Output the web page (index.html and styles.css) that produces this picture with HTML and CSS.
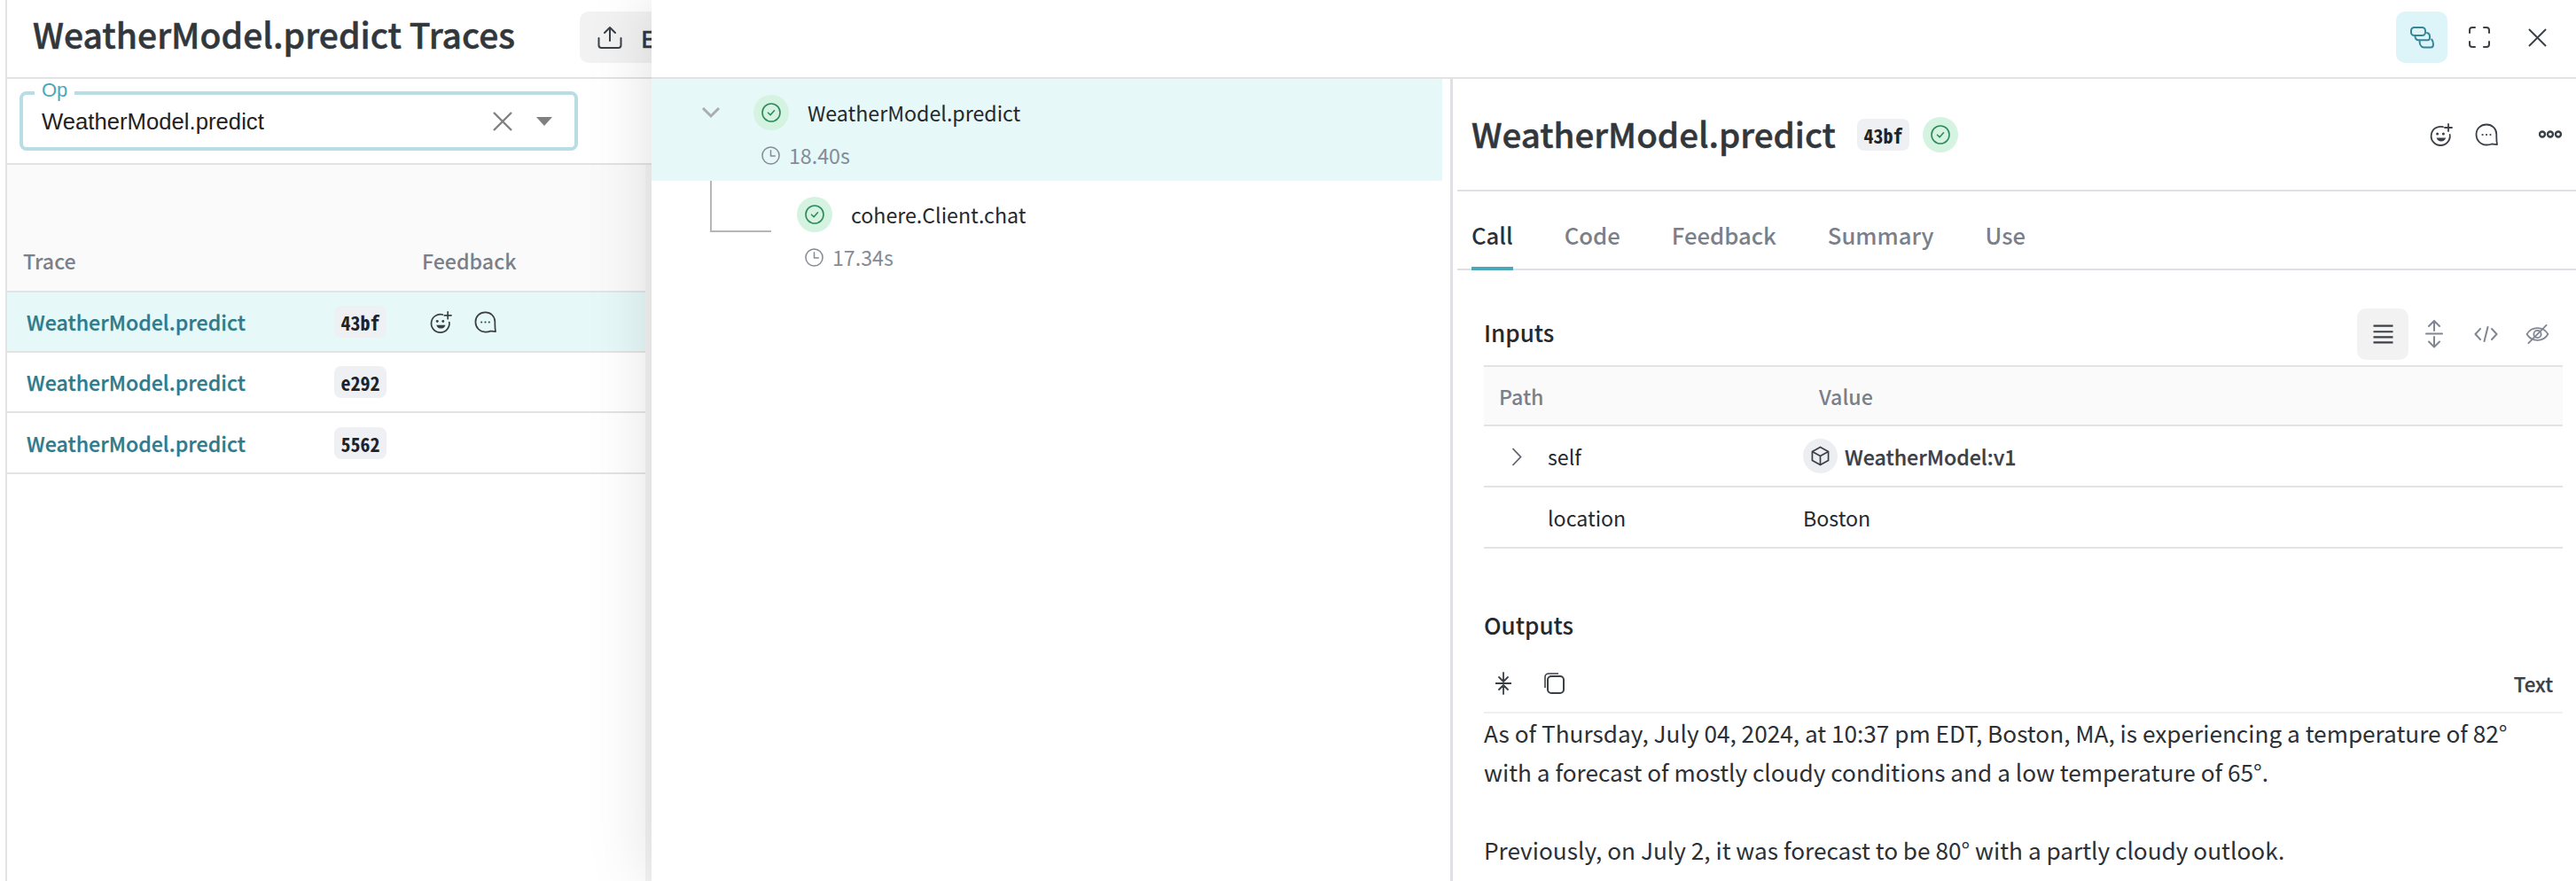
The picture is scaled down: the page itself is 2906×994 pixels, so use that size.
FILE: index.html
```html
<!DOCTYPE html>
<html lang="en">
<head>
<meta charset="utf-8">
<title>WeatherModel.predict Traces</title>
<link rel="stylesheet" href="styles.css">
</head>
<body>
<svg class="defs" width="0" height="0" aria-hidden="true">
  <defs>
    <symbol id="ok" viewBox="0 0 22 22"><circle cx="11" cy="11" r="10" fill="none" stroke="#2f8a5b" stroke-width="1.6"/><path d="M7.5 11.2l2.6 2.6 4.4-5" fill="none" stroke="#2f8a5b" stroke-width="1.6" stroke-linecap="round" stroke-linejoin="round"/></symbol>
    <symbol id="clock" viewBox="0 0 22 22"><circle cx="11" cy="11" r="10" fill="none" stroke="#858c96" stroke-width="1.6"/><path d="M11 5v6.5h5" fill="none" stroke="#858c96" stroke-width="1.6" stroke-linecap="round" stroke-linejoin="round"/></symbol>
    <symbol id="smile" viewBox="0 0 26 26"><path d="M15 4.2A10.6 10.6 0 1 0 22.7 13" fill="none" stroke="#3b4047" stroke-width="1.8" stroke-linecap="round"/><circle cx="8.6" cy="12" r="1.5" fill="#3b4047"/><circle cx="15.4" cy="12" r="1.5" fill="#3b4047"/><path d="M7.6 16.4h10.6c-.8 2.8-2.8 4-5.3 4s-4.500-1.200-5.300-4z" fill="#3b4047"/><path d="M21 1v8M17 5h8" fill="none" stroke="#3b4047" stroke-width="1.8" stroke-linecap="round"/></symbol>
    <symbol id="chat" viewBox="0 0 26 26"><path d="M13 1.500c6.500 0 11.300 4.800 11.300 11 0 3.200-.2 6.500.7 11.500-2.800-.2-4.800-.4-6-.5-1.800.8-3.800 1-6 1-6.500 0-11.500-5.200-11.500-11.800S6.500 1.500 13 1.500z" fill="none" stroke="#3b4047" stroke-width="1.800" stroke-linejoin="round"/><circle cx="8.500" cy="13" r="1.100" fill="#3b4047"/><circle cx="13" cy="13" r="1.100" fill="#3b4047"/><circle cx="17.500" cy="13" r="1.100" fill="#3b4047"/></symbol>
  </defs>
</svg>
<div class="app">
  <nav class="rail"><span class="rail-text">s</span></nav>
  <main class="traces">
    <header class="traces-head">
      <h1 class="page-title">WeatherModel.predict Traces</h1>
      <button class="export" type="button">
        <svg class="export-icon" viewBox="0 0 28 26"><path d="M14 17V2M8 8l6-6 6 6M1.500 14v8c0 1.700 1.300 3 3 3h19c1.700 0 3-1.300 3-3v-8" fill="none" stroke="#3b4047" stroke-width="2" stroke-linecap="round" stroke-linejoin="round"/></svg>
        <span class="export-text">Export</span>
      </button>
    </header>
    <section class="filter-bar">
      <div class="select">
        <span class="select-legend">Op</span>
        <span class="select-value">WeatherModel.predict</span>
        <svg class="select-clear" viewBox="0 0 22 22"><path d="M1 1l20 20M21 1L1 21" fill="none" stroke="#808080" stroke-width="2.400"/></svg>
        <svg class="select-caret" viewBox="0 0 18 10"><path d="M0 0h18l-9 10z" fill="#808080"/></svg>
      </div>
    </section>
    <section class="grid">
      <div class="grid-head">
        <span class="col-trace col-label">Trace</span>
        <span class="col-label">Feedback</span>
      </div>
      <div class="grid-row is-selected">
        <div class="col-trace"><a class="trace-link">WeatherModel.predict</a><code class="hash">43bf</code></div>
        <div class="feedback">
          <svg class="fb-icon"><use href="#smile"/></svg>
          <svg class="fb-icon"><use href="#chat"/></svg>
        </div>
      </div>
      <div class="grid-row">
        <div class="col-trace"><a class="trace-link">WeatherModel.predict</a><code class="hash">e292</code></div>
      </div>
      <div class="grid-row">
        <div class="col-trace"><a class="trace-link">WeatherModel.predict</a><code class="hash">5562</code></div>
      </div>
    </section>
  </main>
  <aside class="drawer">
    <div class="drawer-top">
      <button class="top-btn is-active" type="button">
        <svg class="stack-icon" viewBox="0 0 27 25"><rect x="1" y="1" width="16" height="9" rx="3.500" fill="none" stroke="#38859a" stroke-width="2"/><path d="M5.500 10.500c0 3 1.500 4.800 4 4.800h10c1.500 0 2.500-1 2.500-2.500V11c0-2-1-3.500-3-4M10.500 15.500c0 4 1.500 8 5 8h7.500c2 0 3-1.500 3-3.500 0-2-.3-4-1.800-5.500" fill="none" stroke="#38859a" stroke-width="2" stroke-linecap="round"/></svg>
      </button>
      <button class="top-btn" type="button">
        <svg class="full-icon" viewBox="0 0 24 24"><path d="M7 1H4C2.300 1 1 2.300 1 4v3M17 1h3c1.700 0 3 1.300 3 3v3M23 17v3c0 1.700-1.300 3-3 3h-3M7 23H4c-1.700 0-3-1.300-3-3v-3" fill="none" stroke="#3b4047" stroke-width="2" stroke-linecap="round"/></svg>
      </button>
      <button class="top-btn" type="button">
        <svg class="close-icon" viewBox="0 0 22 22"><path d="M1 1l20 20M21 1L1 21" fill="none" stroke="#3b4047" stroke-width="2"/></svg>
      </button>
    </div>
    <div class="drawer-body">
      <div class="tree">
        <div class="tree-row is-current">
          <div class="tree-line">
            <svg class="tree-chevron" viewBox="0 0 22 14"><path d="M2 2l9 9 9-9" fill="none" stroke="#a9adb3" stroke-width="3"/></svg>
            <span class="status"><svg class="status-icon"><use href="#ok"/></svg></span>
            <span class="tree-name">WeatherModel.predict</span>
          </div>
          <div class="tree-time"><svg class="clock"><use href="#clock"/></svg>18.40s</div>
        </div>
        <div class="tree-row is-child">
          <span class="tree-link"></span>
          <div class="tree-line">
            <span class="status"><svg class="status-icon"><use href="#ok"/></svg></span>
            <span class="tree-name">cohere.Client.chat</span>
          </div>
          <div class="tree-time"><svg class="clock"><use href="#clock"/></svg>17.34s</div>
        </div>
      </div>
      <div class="detail">
        <div class="detail-head">
          <h2 class="detail-title">WeatherModel.predict</h2>
          <code class="hash">43bf</code>
          <span class="status status-head"><svg class="status-icon"><use href="#ok"/></svg></span>
          <div class="detail-actions">
            <svg class="act-icon"><use href="#smile"/></svg>
            <svg class="act-icon"><use href="#chat"/></svg>
            <svg class="more-icon" viewBox="0 0 26 9"><circle cx="4" cy="4.500" r="3" fill="none" stroke="#3b4047" stroke-width="2.400"/><circle cx="13" cy="4.500" r="3" fill="none" stroke="#3b4047" stroke-width="2.400"/><circle cx="22" cy="4.500" r="3" fill="none" stroke="#3b4047" stroke-width="2.400"/></svg>
          </div>
        </div>
        <div class="tabs">
          <span class="tab is-on">Call</span>
          <span class="tab">Code</span>
          <span class="tab">Feedback</span>
          <span class="tab">Summary</span>
          <span class="tab">Use</span>
        </div>
        <div class="call">
          <div class="section-head">
            <h3 class="section-title">Inputs</h3>
            <div class="view-tools">
              <span class="tool is-on"><svg class="tool-icon" viewBox="0 0 22 20"><path d="M1 1.500h20M1 7.500h20M1 13h20M1 18.500h20" fill="none" stroke="#3b4047" stroke-width="2"/></svg></span>
              <span class="tool"><svg class="tool-icon tall" viewBox="0 0 20 32"><path d="M1 15.500h18M10 12V2M4 7l6-6 6 6M10 19v11M4 24.500l6 6 6-6" fill="none" stroke="#808792" stroke-width="2" stroke-linecap="round" stroke-linejoin="round"/></svg></span>
              <span class="tool"><svg class="tool-icon" viewBox="0 0 27 18"><path d="M7 3L1.500 9 7 15M20 3l5.500 6-5.500 6M15.500 1l-4 16" fill="none" stroke="#808792" stroke-width="2" stroke-linecap="round" stroke-linejoin="round"/></svg></span>
              <span class="tool"><svg class="tool-icon" viewBox="0 0 28 24"><path d="M1 12c3-5 7.500-7.500 13-7.500S24 7 27 12c-3 5-7.500 7.500-13 7.500S4 17 1 12z" fill="none" stroke="#808792" stroke-width="2"/><circle cx="14" cy="12" r="4.500" fill="none" stroke="#808792" stroke-width="2"/><path d="M25 1L3 23" fill="none" stroke="#808792" stroke-width="2" stroke-linecap="round"/></svg></span>
            </div>
          </div>
          <div class="kv">
            <div class="kv-head"><span class="kv-path">Path</span><span class="kv-value-label">Value</span></div>
            <div class="kv-row">
              <svg class="kv-chevron" viewBox="0 0 12 21"><path d="M1.500 1l9 9.500-9 9.500" fill="none" stroke="#5f6670" stroke-width="1.800"/></svg>
              <span class="kv-key">self</span>
              <span class="kv-val is-ref"><span class="cube"><svg class="cube-icon" viewBox="0 0 22 24"><path d="M11 1.500l9.500 5.300v10.400L11 22.500l-9.500-5.300V6.800zM1.500 6.800L11 12l9.500-5.200M11 12v10.500" fill="none" stroke="#3b4047" stroke-width="1.800" stroke-linejoin="round"/></svg></span>WeatherModel:v1</span>
            </div>
            <div class="kv-row">
              <span class="kv-key">location</span>
              <span class="kv-val">Boston</span>
            </div>
          </div>
          <h3 class="section-title outputs-title">Outputs</h3>
          <div class="output-tools">
            <svg class="out-collapse" viewBox="0 0 18 26"><path d="M0 13h18M9 1v9M4 6l5 5 5-5M9 25v-9M4 20l5-5 5 5" fill="none" stroke="#3b4047" stroke-width="1.800" stroke-linecap="round" stroke-linejoin="round"/></svg>
            <svg class="out-copy" viewBox="0 0 24 24"><rect x="5" y="4" width="18" height="19" rx="4" fill="none" stroke="#3b4047" stroke-width="2"/><path d="M2 17V5c0-2.200 1.800-4 4-4h11" fill="none" stroke="#3b4047" stroke-width="1.600"/></svg>
            <span class="out-type">Text</span>
          </div>
          <div class="output-text">
            <p class="para">As of Thursday, July 04, 2024, at 10:37 pm EDT, Boston, MA, is experiencing a temperature of 82°<br>with a forecast of mostly cloudy conditions and a low temperature of 65°.</p>
            <p class="para">Previously, on July 2, it was forecast to be 80° with a partly cloudy outlook.</p>
          </div>
        </div>
      </div>
    </div>
  </aside>
</div>
</body>
</html>
```
FILE: styles.css
```css
* { box-sizing: border-box; }
html, body { margin: 0; height: 100%; overflow: hidden; background: #fff; }
body { font-family: "Noto Sans CJK SC", "Noto Sans", sans-serif; font-size: 26px; color: #2b3036; }
.defs { display: block; height: 0; }
.app { display: flex; height: 994px; width: 2906px; }

.rail { width: 8px; flex: none; border-right: 2px solid #e3e3e6; height: 100%; overflow: hidden; position: relative; }
.rail-text { position: absolute; left: -13px; top: 62px; font-size: 26px; line-height: 36px; color: #222; }

.traces { width: 727px; flex: none; display: flex; flex-direction: column; overflow: hidden; }
.traces-head { height: 89px; flex: none; display: flex; align-items: center; border-bottom: 2px solid #e3e3e3; padding: 0 0 0 29px; }
.page-title { margin: 0; width: 545px; flex: none; padding-bottom: 11px; font-size: 39.100px; font-weight: 500; -webkit-text-stroke: .5px #32373c; line-height: 56px; color: #32373c; white-space: nowrap; }
.export { margin-left: 72px; flex: none; width: 120px; height: 58px; display: flex; align-items: center; border: 0; background: #f2f2f2; border-radius: 10px; padding: 0 0 0 20px; margin-top: -3px; font: inherit; font-weight: 500; -webkit-text-stroke: .3px #32373c; color: #32373c; }
.export-icon { width: 28px; height: 26px; flex: none; }
.export-text { margin-left: 21px; }

.filter-bar { height: 97px; flex: none; border-bottom: 2px solid #e3e3e3; padding: 14px 0 0 14px; }
.select { position: relative; width: 630px; height: 67px; border: 4px solid #b8dde4; border-radius: 8px; display: flex; align-items: center; padding: 0 25px 0 21px; font-family: "Liberation Sans", Arial, sans-serif; }
.select-legend { position: absolute; left: 13px; top: -18px; background: #fff; padding: 0 8px; font-size: 22px; line-height: 26px; color: #4aa8b9; }
.select-value { flex: 1; font-size: 25.700px; line-height: 32px; color: #222; }
.select-clear { width: 22px; height: 22px; flex: none; margin-right: 27px; }
.select-caret { width: 18px; height: 10px; flex: none; }

.grid { flex: 1; display: flex; flex-direction: column; border-right: 7px solid rgba(0, 0, 0, .045); }
.grid-head { height: 144px; flex: none; background: #fafafa; border-bottom: 2px solid #e3e3e3; display: flex; align-items: flex-end; padding: 0 0 17px 0; }
.col-label { font-size: 23.200px; font-weight: 500; line-height: 34px; color: #79808a; }
.col-trace { width: 468px; flex: none; display: flex; align-items: center; padding-left: 18px; }
.grid-row { height: 68px; flex: none; display: flex; align-items: center; border-bottom: 2px solid #e3e3e3; }
.grid-row:last-child { height: 69px; }
.grid-row .col-trace { padding-left: 22px; }
.grid-row.is-selected { background: #e6f8f8; }
.trace-link { width: 347px; flex: none; font-size: 23.200px; font-weight: 500; -webkit-text-stroke: .25px #2f7a8b; line-height: 36px; color: #2f7a8b; white-space: nowrap; }
.hash { display: inline-block; width: 59px; height: 36px; flex: none; background: #eef0f3; border-radius: 8px; font-family: "Noto Sans Mono CJK SC", "DejaVu Sans Mono", monospace; font-size: 22px; font-weight: 700; line-height: 36px; text-align: center; color: #1f2328; }
.feedback { display: flex; gap: 25px; padding-left: 9px; }
.fb-icon { width: 25px; height: 25px; flex: none; }

.drawer { flex: 1; min-width: 0; display: flex; flex-direction: column; background: #fff; box-shadow: 0 0 70px rgba(0, 0, 0, .13); position: relative; }
.drawer-top { height: 89px; flex: none; display: flex; align-items: center; justify-content: flex-end; border-bottom: 2px solid #e3e3e3; padding: 0 15px 3px 0; gap: 7px; }
.top-btn { width: 58px; height: 58px; border: 0; background: none; border-radius: 10px; padding: 0; display: flex; align-items: center; justify-content: center; }
.top-btn.is-active { background: #ddf4f9; }
.stack-icon { width: 27px; height: 25px; }
.full-icon { width: 24px; height: 24px; }
.close-icon { width: 21px; height: 21px; }

.drawer-body { flex: 1; min-height: 0; display: flex; }
.tree { width: 904px; flex: none; padding-right: 9px; border-right: 3px solid #dfe0e6; }
.tree-row { position: relative; }
.tree-row.is-current { height: 115px; background: #e6f8f8; padding: 18px 0 0 56px; }
.tree-row.is-child { height: 120px; padding: 18px 0 0 164px; }
.tree-line { display: flex; align-items: center; height: 40px; }
.tree-chevron { width: 22px; height: 14px; flex: none; margin-right: 37px; }
.status { width: 40px; height: 40px; flex: none; border-radius: 50%; background: #d5f3e1; display: flex; align-items: center; justify-content: center; }
.status-icon { width: 22px; height: 22px; }
.tree-name { margin-left: 21px; font-size: 23.200px; line-height: 36px; color: #25292e; white-space: nowrap; }
.tree-time { display: flex; align-items: center; height: 30px; margin-top: 13px; font-size: 23.200px; line-height: 30px; color: #858c96; }
.is-current .tree-time { margin-left: 68px; }
.is-child .tree-time { margin-left: 9px; }
.clock { width: 21px; height: 21px; flex: none; margin-right: 10px; }
.tree-link { position: absolute; left: 66px; top: 0; width: 69px; height: 58px; border-left: 2px solid #b4b6ba; border-bottom: 2px solid #b4b6ba; }

.detail { flex: 1; min-width: 0; padding-left: 5px; display: flex; flex-direction: column; }
.detail-head { height: 127px; flex: none; border-bottom: 2px solid #dfe0e6; display: flex; align-items: center; padding: 0 16px 0 16px; }
.detail-title { margin: 0 22px 0 0; width: 413px; flex: none; padding-bottom: 3px; font-size: 38.600px; font-weight: 500; -webkit-text-stroke: .5px #32373c; line-height: 56px; color: #32373c; white-space: nowrap; }
.status-head { margin-left: 15px; }
.detail-actions { margin-left: auto; display: flex; align-items: center; }
.act-icon { width: 26px; height: 26px; flex: none; margin-right: 25px; }
.act-icon + .act-icon { margin-right: 46px; }
.more-icon { width: 26px; height: 9px; flex: none; }

.tabs { height: 89px; flex: none; display: flex; gap: 58px; align-items: stretch; border-bottom: 2px solid #dfe0e6; padding-left: 16px; }
.tab { display: flex; align-items: center; padding-top: 13px; font-size: 25.700px; font-weight: 500; line-height: 36px; color: #79808a; border-bottom: 4px solid transparent; margin-bottom: -2px; }
.tab.is-on { color: #2b3036; border-bottom-color: #4aa8b9; }

.call { flex: 1; min-height: 0; padding: 43px 15px 0 30px; display: flex; flex-direction: column; }
.section-head { height: 58px; flex: none; display: flex; align-items: center; justify-content: space-between; margin-bottom: 6px; }
.section-title { margin: 0; padding-bottom: 4px; font-size: 26px; font-weight: 500; line-height: 30px; color: #25292e; }
.view-tools { display: flex; }
.tool { width: 58px; height: 58px; display: flex; align-items: center; justify-content: center; border-radius: 10px; }
.tool.is-on { background: #f2f2f2; }
.tool-icon { width: 27px; height: 22px; }
.tool-icon.tall { width: 20px; height: 32px; }

.kv { flex: none; }
.kv-head { height: 69px; border-top: 2px solid #e3e3e3; border-bottom: 2px solid #e3e3e3; background: #fafafa; display: flex; align-items: center; padding-left: 17px; font-size: 23.200px; font-weight: 500; color: #79808a; }
.kv-path { width: 361px; flex: none; }
.kv-row { height: 69px; border-bottom: 2px solid #e3e3e3; display: flex; align-items: center; padding-left: 72px; position: relative; font-size: 23.200px; color: #25292e; }
.kv-chevron { position: absolute; left: 31px; top: 24px; width: 12px; height: 21px; }
.kv-key { width: 288px; flex: none; }
.kv-val { display: flex; align-items: center; white-space: nowrap; }
.kv-val.is-ref { font-weight: 500; -webkit-text-stroke: .25px #3b4047; color: #3b4047; }
.cube { width: 39px; height: 39px; border-radius: 50%; background: #eceef2; display: flex; align-items: center; justify-content: center; margin-right: 8px; }
.cube-icon { width: 21px; height: 23px; }

.outputs-title { margin-top: 71px; }
.output-tools { height: 81px; flex: none; display: flex; align-items: center; padding: 14px 11px 0 13px; border-bottom: 2px solid #efefef; }
.out-collapse { width: 18px; height: 26px; flex: none; margin-right: 36px; }
.out-copy { width: 24px; height: 24px; flex: none; }
.out-type { margin-left: auto; font-size: 22.300px; font-weight: 500; -webkit-text-stroke: .25px #3b4047; line-height: 32px; color: #3b4047; }
.output-text { font-size: 26.200px; line-height: 44px; color: #2b3036; }
.para { margin: 0 0 44px; white-space: nowrap; }
```
